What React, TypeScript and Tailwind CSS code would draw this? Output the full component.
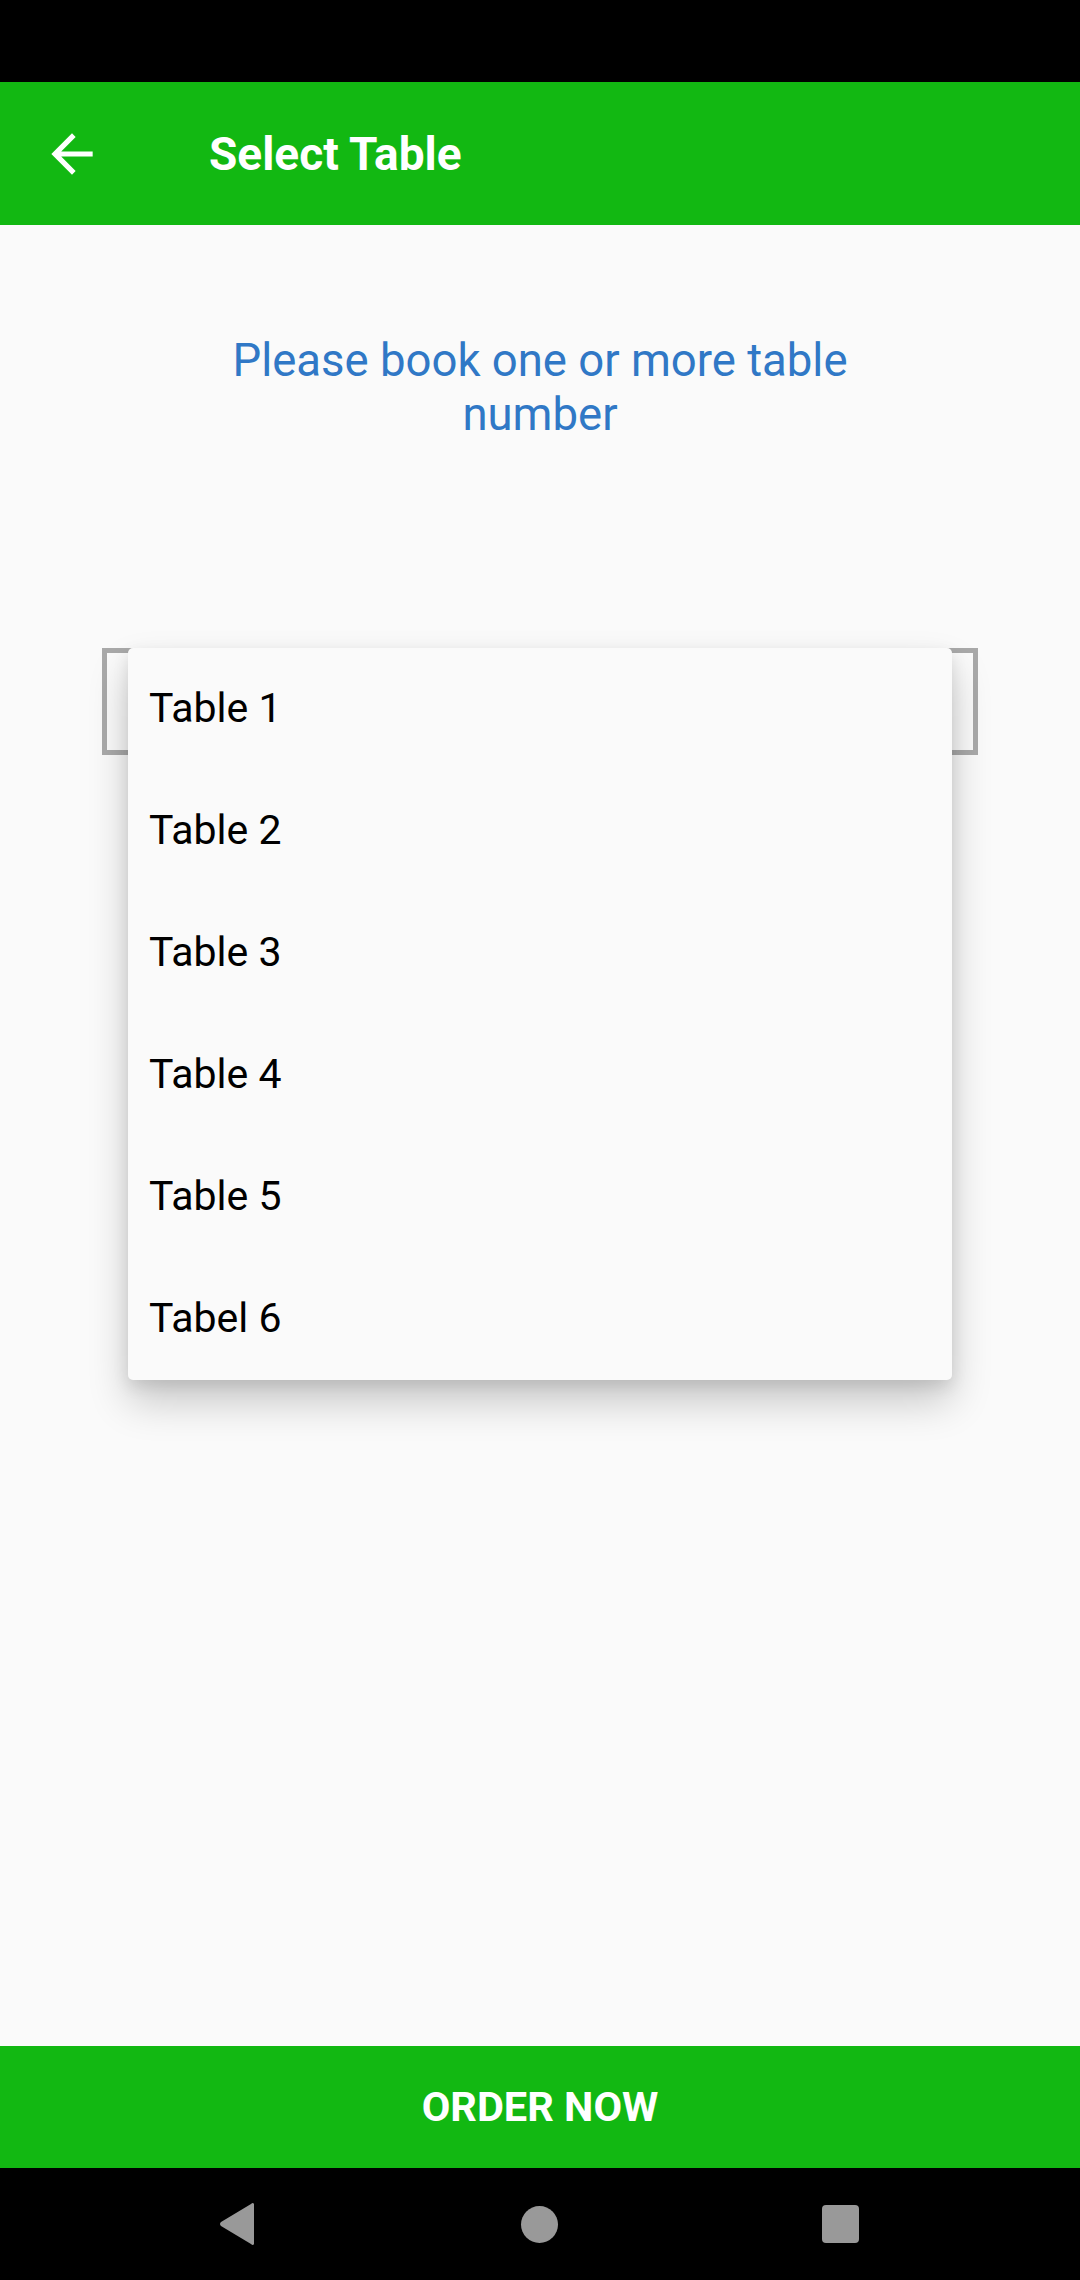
import { useState } from "react";

const tables = ["Table 1", "Table 2", "Table 3", "Table 4", "Table 5", "Tabel 6"];

export default function App() {
  const [selected, setSelected] = useState<string | null>(null);
  const [open, setOpen] = useState(true);

  return (
    <div className="flex h-[2280px] w-[1080px] flex-col bg-[#fafafa] font-['Roboto',sans-serif]">
      {/* status bar */}
      <div className="h-[82px] shrink-0 bg-black" />

      {/* toolbar */}
      <div className="flex h-[143px] shrink-0 items-center bg-[#12b812]">
        <button className="ml-[41px] flex h-[62px] w-[62px] items-center justify-center text-white">
          <svg viewBox="0 0 24 24" width="62" height="62" fill="currentColor">
            <path d="M20 11H7.83l5.59-5.59L12 4l-8 8 8 8 1.41-1.41L7.83 13H20v-2z" />
          </svg>
        </button>
        <h1 className="ml-[106px] text-[46px] font-bold leading-none text-white">Select Table</h1>
      </div>

      {/* content */}
      <div className="flex flex-1 flex-col items-center">
        <p className="mt-[109px] w-[700px] text-center text-[45.5px] leading-[54px] text-[#3078c6]">
          Please book one or more table number
        </p>

        <div className="relative mt-[206px] h-[107px] w-[876px]">
          <div
            onClick={() => setOpen(!open)}
            className="flex h-full w-full items-center border-[5px] border-[#a9a9a9] px-[21px] text-[42px] text-black"
          >
            {selected ?? ""}
          </div>

          {open && (
            <ul className="absolute left-[26px] top-0 z-10 w-[824px] rounded-[5px] bg-[#fafafa] shadow-[0_22px_40px_rgba(0,0,0,0.2),0_6px_16px_rgba(0,0,0,0.1)]">
              {tables.map((t) => (
                <li
                  key={t}
                  onClick={() => {
                    setSelected(t);
                    setOpen(false);
                  }}
                  className="flex h-[122px] items-center pl-[21px] text-[41px] text-black"
                >
                  {t}
                </li>
              ))}
            </ul>
          )}
        </div>
      </div>

      {/* order button */}
      <button className="flex h-[122px] shrink-0 items-center justify-center bg-[#12b812] text-[41.5px] font-bold text-white">
        ORDER NOW
      </button>

      {/* navigation bar */}
      <div className="relative flex h-[112px] shrink-0 items-center bg-black">
        <svg className="absolute left-[219px]" width="37" height="42" viewBox="0 0 37 42">
          <path d="M35 1 L35 41 Q34 43 32 41 L2 23 Q0 21 2 19 L32 1 Q34 -1 35 1 Z" fill="#999999" />
        </svg>
        <div className="absolute left-[521px] h-[37px] w-[37px] rounded-full bg-[#999999]" />
        <div className="absolute left-[822px] h-[38px] w-[37px] rounded-[4px] bg-[#999999]" />
      </div>
    </div>
  );
}
